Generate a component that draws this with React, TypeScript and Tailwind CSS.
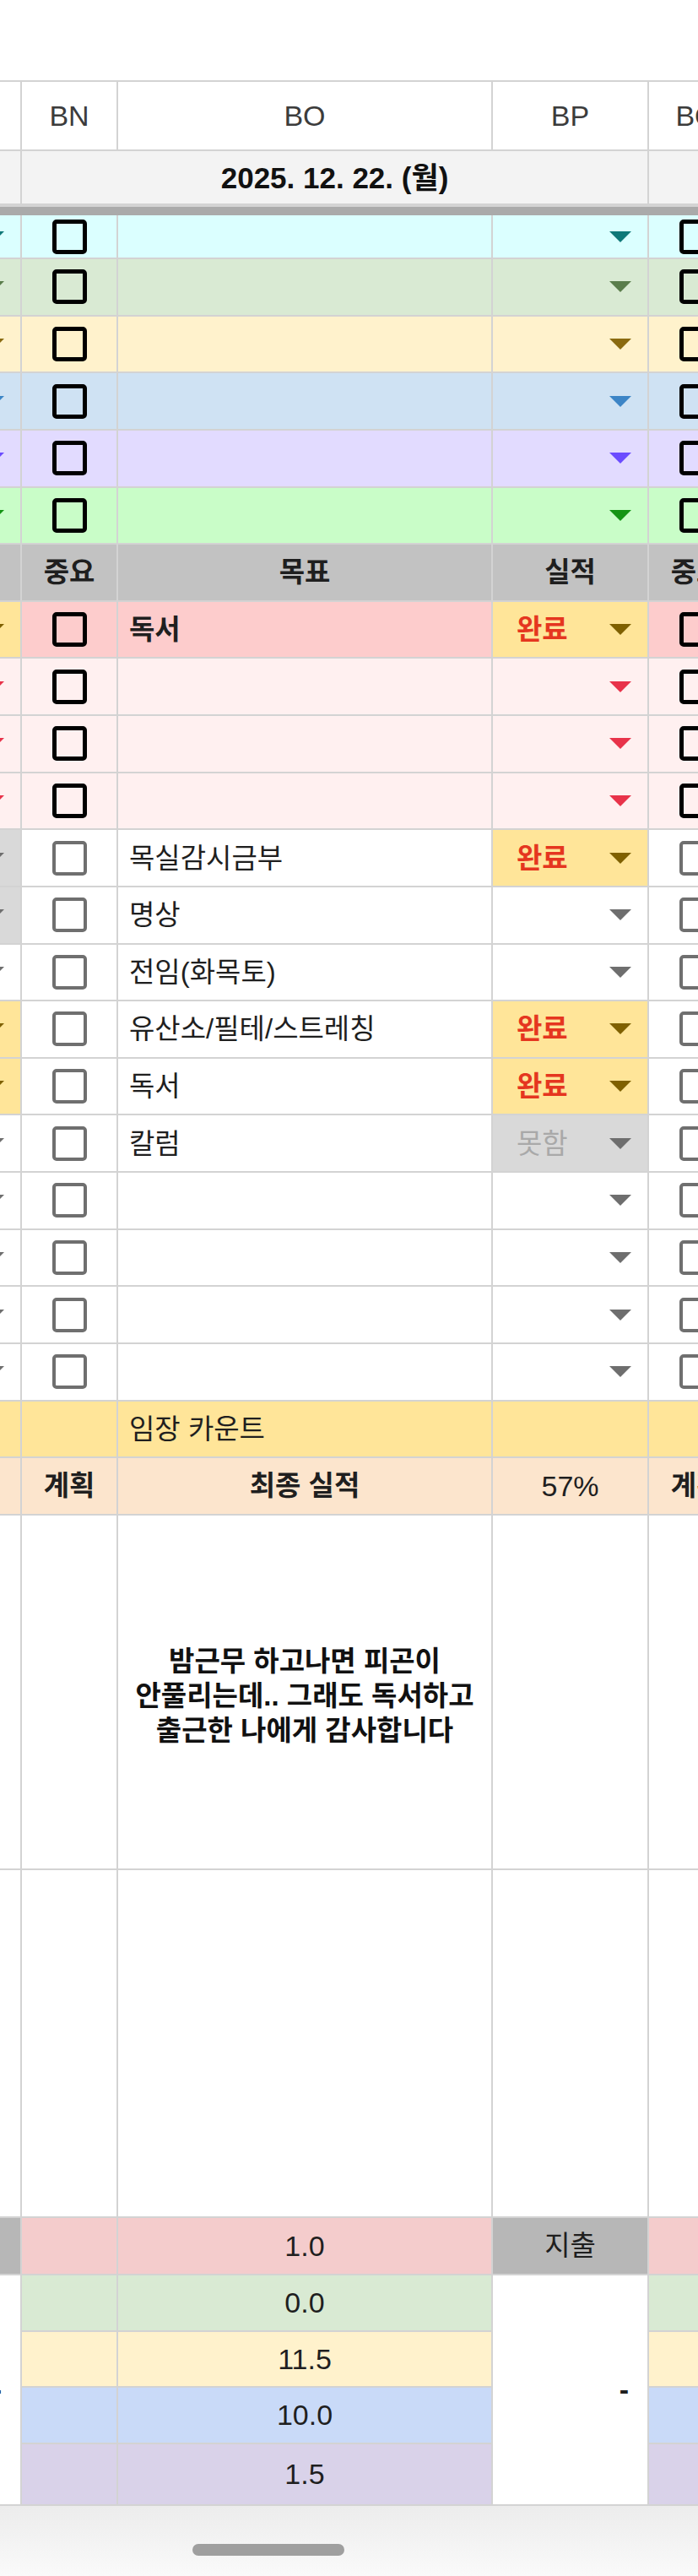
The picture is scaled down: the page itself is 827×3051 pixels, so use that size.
import React from "react";

type CP = { bg?: string; className?: string; children?: React.ReactNode };

function C({ bg = "bg-white", className = "", children }: CP) {
  return (
    <div
      className={`border-r-2 border-b-2 border-[#d3d3d3] flex items-center overflow-hidden whitespace-nowrap ${bg} ${className}`}
    >
      {children}
    </div>
  );
}

function Tri({ color }: { color: string }) {
  return (
    <svg width="26" height="13" viewBox="0 0 26 13" className="shrink-0">
      <polygon points="0,0 26,0 13,13" fill={color} />
    </svg>
  );
}

function Check({ gray = false }: { gray?: boolean }) {
  return (
    <div
      className={
        gray
          ? "w-[41px] h-[41px] rounded-[5px] border-[4px] border-[#6f6f6f]"
          : "w-[41px] h-[41px] rounded-[5px] border-[5px] border-black"
      }
    />
  );
}

type DDP = { bg: string; tri: string; text?: string; kind?: "done" | "fail" };
function DD({ bg, tri, text, kind }: DDP) {
  return (
    <C bg={bg} className="justify-between pl-[28px] pr-[19px]">
      {text ? (
        <span
          className={
            kind === "done"
              ? "text-[33px] font-bold text-[#e5361f] leading-none"
              : "text-[33px] text-[#a9a9a9] leading-none"
          }
        >
          {text}
        </span>
      ) : (
        <span />
      )}
      <Tri color={tri} />
    </C>
  );
}

function CheckCell({ bg, gray }: { bg: string; gray?: boolean }) {
  return (
    <C bg={bg} className="justify-center">
      <Check gray={gray} />
    </C>
  );
}

const DONE = { bg: "bg-[#ffe599]", tri: "#7f6000", text: "완료", kind: "done" as const };
const DONE_HIDDEN = { bg: "bg-[#ffe599]", tri: "#7f6000" };
const FAIL = { bg: "bg-[#d9d9d9]", tri: "#6e6e6e", text: "못함", kind: "fail" as const };
const FAIL_HIDDEN = { bg: "bg-[#d9d9d9]", tri: "#6e6e6e" };
const WHITE = { bg: "bg-white", tri: "#6e6e6e" };

const colorRows = [
  { bg: "bg-[#dbffff]", tri: "#0f7878" },
  { bg: "bg-[#d9ead3]", tri: "#5a7d4b" },
  { bg: "bg-[#fff2cc]", tri: "#8a6a10" },
  { bg: "bg-[#cfe2f3]", tri: "#3d85c6" },
  { bg: "bg-[#e2dbff]", tri: "#6b4cff" },
  { bg: "bg-[#c9fdc8]", tri: "#149414" },
];

const PINK = { bg: "bg-[#fff0f0]", tri: "#e8334a" };

const whiteRows: { prev: DDP; label: string; cur: DDP }[] = [
  { prev: FAIL_HIDDEN, label: "목실감시금부", cur: DONE },
  { prev: FAIL_HIDDEN, label: "명상", cur: WHITE },
  { prev: WHITE, label: "전임(화목토)", cur: WHITE },
  { prev: DONE_HIDDEN, label: "유산소/필테/스트레칭", cur: DONE },
  { prev: DONE_HIDDEN, label: "독서", cur: DONE },
  { prev: WHITE, label: "칼럼", cur: FAIL },
  { prev: WHITE, label: "", cur: WHITE },
  { prev: WHITE, label: "", cur: WHITE },
  { prev: WHITE, label: "", cur: WHITE },
  { prev: WHITE, label: "", cur: WHITE },
];

const bottomRows = [
  { bg: "bg-[#d9ead3]", v: "0.0" },
  { bg: "bg-[#fff2cc]", v: "11.5" },
  { bg: "bg-[#c9daf8]", v: "10.0" },
  { bg: "bg-[#d9d2e9]", v: "1.5" },
];

export default function App() {
  const hdr = "bg-[#f3f3f3] border-t-2 justify-center text-[34px] text-[#3c3c3c] leading-none";
  const bold = "justify-center text-[33px] font-bold text-[#1f1f1f] leading-none";
  return (
    <div className="w-[827px] h-[3051px] overflow-hidden bg-white font-['Liberation_Sans','Noto_Sans_CJK_KR',sans-serif] text-[#1f1f1f]">
      <div className="h-[95px]" />
      <div className="ml-[-159px] w-[1042px] grid grid-cols-[185px_114px_444px_185px_114px] grid-rows-[84px_64px_12px_52px_repeat(22,67.64px)_420px_412px_68px_67px_66px_67px_73px]">
        {/* column header */}
        <C className={hdr} />
        <C className={hdr}>BN</C>
        <C className={hdr}>BO</C>
        <C className={hdr}>BP</C>
        <C className={hdr}>BQ</C>

        {/* date row */}
        <C bg="bg-[#f3f3f3]" />
        <C bg="bg-[#f3f3f3]" className="col-span-3 justify-center text-[35px] font-bold text-[#111] leading-none">
          2025. 12. 22. (월)
        </C>
        <C bg="bg-[#f3f3f3]" />

        {/* frozen bar */}
        <div className="col-span-5 bg-[#aaaaaa] border-t-2 border-[#d3d3d3]" />

        {/* colored rows */}
        {colorRows.map((r, i) => (
          <React.Fragment key={"c" + i}>
            <DD bg={r.bg} tri={r.tri} />
            <CheckCell bg={r.bg} />
            <C bg={r.bg} />
            <DD bg={r.bg} tri={r.tri} />
            <CheckCell bg={r.bg} />
          </React.Fragment>
        ))}

        {/* gray header */}
        <C bg="bg-[#c2c2c2]" />
        <C bg="bg-[#c2c2c2]" className={bold}>중요</C>
        <C bg="bg-[#c2c2c2]" className={bold}>목표</C>
        <C bg="bg-[#c2c2c2]" className={bold}>실적</C>
        <C bg="bg-[#c2c2c2]" className={bold}>중요</C>

        {/* red row */}
        <DD {...DONE_HIDDEN} />
        <CheckCell bg="bg-[#fdcccc]" />
        <C bg="bg-[#fdcccc]" className="pl-[13px] text-[33px] font-bold leading-none">독서</C>
        <DD {...DONE} />
        <CheckCell bg="bg-[#fdcccc]" />

        {/* pink rows */}
        {[0, 1, 2].map((i) => (
          <React.Fragment key={"p" + i}>
            <DD {...PINK} />
            <CheckCell bg={PINK.bg} />
            <C bg={PINK.bg} />
            <DD {...PINK} />
            <CheckCell bg={PINK.bg} />
          </React.Fragment>
        ))}

        {/* white rows */}
        {whiteRows.map((r, i) => (
          <React.Fragment key={"w" + i}>
            <DD {...r.prev} />
            <CheckCell bg="bg-white" gray />
            <C className="pl-[13px] text-[33px] leading-none">{r.label}</C>
            <DD {...r.cur} />
            <CheckCell bg="bg-white" gray />
          </React.Fragment>
        ))}

        {/* 임장 카운트 */}
        <C bg="bg-[#ffe599]" />
        <C bg="bg-[#ffe599]" />
        <C bg="bg-[#ffe599]" className="pl-[13px] text-[33px] leading-none">임장 카운트</C>
        <C bg="bg-[#ffe599]" />
        <C bg="bg-[#ffe599]" />

        {/* 최종 실적 */}
        <C bg="bg-[#fce5cd]" />
        <C bg="bg-[#fce5cd]" className={bold}>계획</C>
        <C bg="bg-[#fce5cd]" className={bold}>최종 실적</C>
        <C bg="bg-[#fce5cd]" className="justify-center text-[34px] leading-none">57%</C>
        <C bg="bg-[#fce5cd]" className={bold}>계획</C>

        {/* message */}
        <C />
        <C />
        <C className="justify-center text-center text-[33px] font-bold leading-[41px] text-[#111] pt-[10px]">
          <span>
            밤근무 하고나면 피곤이
            <br />
            안풀리는데.. 그래도 독서하고
            <br />
            출근한 나에게 감사합니다
          </span>
        </C>
        <C />
        <C />

        {/* empty tall row */}
        <C />
        <C />
        <C />
        <C />
        <C />

        {/* bottom block */}
        <C bg="bg-[#b7b7b7]" />
        <C bg="bg-[#f4cccc]" />
        <C bg="bg-[#f4cccc]" className="justify-center text-[34px] leading-none">1.0</C>
        <C bg="bg-[#b7b7b7]" className="justify-center text-[33px] leading-none">지출</C>
        <C bg="bg-[#f4cccc]" />

        <C className="row-span-4 justify-end pr-[22px] text-[34px] font-bold leading-none">-</C>
        <C bg={bottomRows[0].bg} />
        <C bg={bottomRows[0].bg} className="justify-center text-[34px] leading-none">{bottomRows[0].v}</C>
        <C className="row-span-4 justify-end pr-[22px] text-[34px] font-bold leading-none">-</C>
        <C bg={bottomRows[0].bg} />
        {bottomRows.slice(1).map((r, i) => (
          <React.Fragment key={"b" + i}>
            <C bg={r.bg} />
            <C bg={r.bg} className="justify-center text-[34px] leading-none">{r.v}</C>
            <C bg={r.bg} />
          </React.Fragment>
        ))}
      </div>

      {/* bottom scroll bar */}
      <div className="h-[83px] bg-gradient-to-b from-[#ececec] to-[#fafafa] pt-[45px]">
        <div className="ml-[228px] w-[180px] h-[14px] rounded-full bg-[#9f9f9f]" />
      </div>
    </div>
  );
}
